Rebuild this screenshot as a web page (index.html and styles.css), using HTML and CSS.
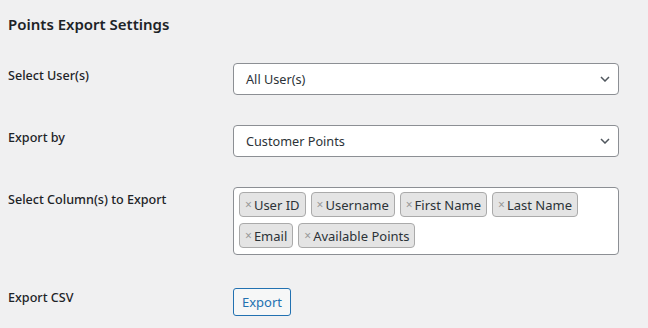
FILE: index.html
```
<!DOCTYPE html>
<html>

<head>
    <link rel="stylesheet" href="styles.css">
</head>

<body>
    <div class="wrap">
        <h2>Points Export Settings</h2>

        <div class="form-table">
            <div class="label">Select User(s)</div>
            <div class="field">
                <div class="select">
                    <span>All User(s)</span>
                    <svg width="10" height="6" viewBox="0 0 10 6"><path d="M1 1l4 4 4-4" fill="none" stroke="#50575e" stroke-width="1.5"/></svg>
                </div>
            </div>

            <div class="label">Export by</div>
            <div class="field">
                <div class="select">
                    <span>Customer Points</span>
                    <svg width="10" height="6" viewBox="0 0 10 6"><path d="M1 1l4 4 4-4" fill="none" stroke="#50575e" stroke-width="1.5"/></svg>
                </div>
            </div>

            <div class="label">Select Column(s) to Export</div>
            <div class="field">
                <div class="multi">
                    <span class="tag"><span class="x">×</span>User ID</span>
                    <span class="tag"><span class="x">×</span>Username</span>
                    <span class="tag"><span class="x">×</span>First Name</span>
                    <span class="tag"><span class="x">×</span>Last Name</span>
                    <span class="tag"><span class="x">×</span>Email</span>
                    <span class="tag"><span class="x">×</span>Available Points</span>
                </div>
            </div>

            <div class="label">Export CSV</div>
            <div class="field">
                <button class="button">Export</button>
            </div>
        </div>
    </div>
</body>

</html>
```

FILE: styles.css
```
body {
    font-family: 'Noto Sans', 'Open Sans', sans-serif;
    font-size: 13px;
    color: #1d2327;
    background-color: #f0f0f1;
    margin: 0;
    padding: 0;
}

div.wrap {
    padding: 0 8px;
}

h2 {
    font-size: 15px;
    font-weight: 600;
    margin: 0;
    padding-top: 13px;
    line-height: 22px;
}

div.form-table {
    display: grid;
    grid-template-columns: 225px 386px;
    row-gap: 30px;
    margin-top: 28px;
}

div.label {
    font-size: 12.6px;
    font-weight: 500;
    line-height: 18px;
    padding-top: 4px;
}

div.select {
    display: flex;
    align-items: center;
    justify-content: space-between;
    height: 32px;
    box-sizing: border-box;
    padding: 0 8px 0 12px;
    background-color: #fff;
    border: 1px solid #8c8f94;
    border-radius: 4px;
    color: #2c3338;
    font-size: 12.7px;
}

div.multi {
    display: flex;
    flex-wrap: wrap;
    gap: 6px 5px;
    padding: 4px 5px 6px;
    background-color: #fff;
    border: 1px solid #8c8f94;
    border-radius: 4px;
}

span.tag {
    display: inline-flex;
    align-items: center;
    height: 25px;
    box-sizing: border-box;
    padding: 0 5px;
    background-color: #e4e4e4;
    border: 1px solid #aaa;
    border-radius: 4px;
    color: #2c3338;
}

span.x {
    color: #999;
    font-size: 12px;
    margin-right: 2px;
}

button.button {
    font-family: inherit;
    font-size: 13px;
    color: #2271b1;
    background-color: #f6f7f7;
    border: 1px solid #2271b1;
    border-radius: 3px;
    height: 28px;
    padding: 0 8px;
    margin-top: 3px;
    cursor: pointer;
}
```
